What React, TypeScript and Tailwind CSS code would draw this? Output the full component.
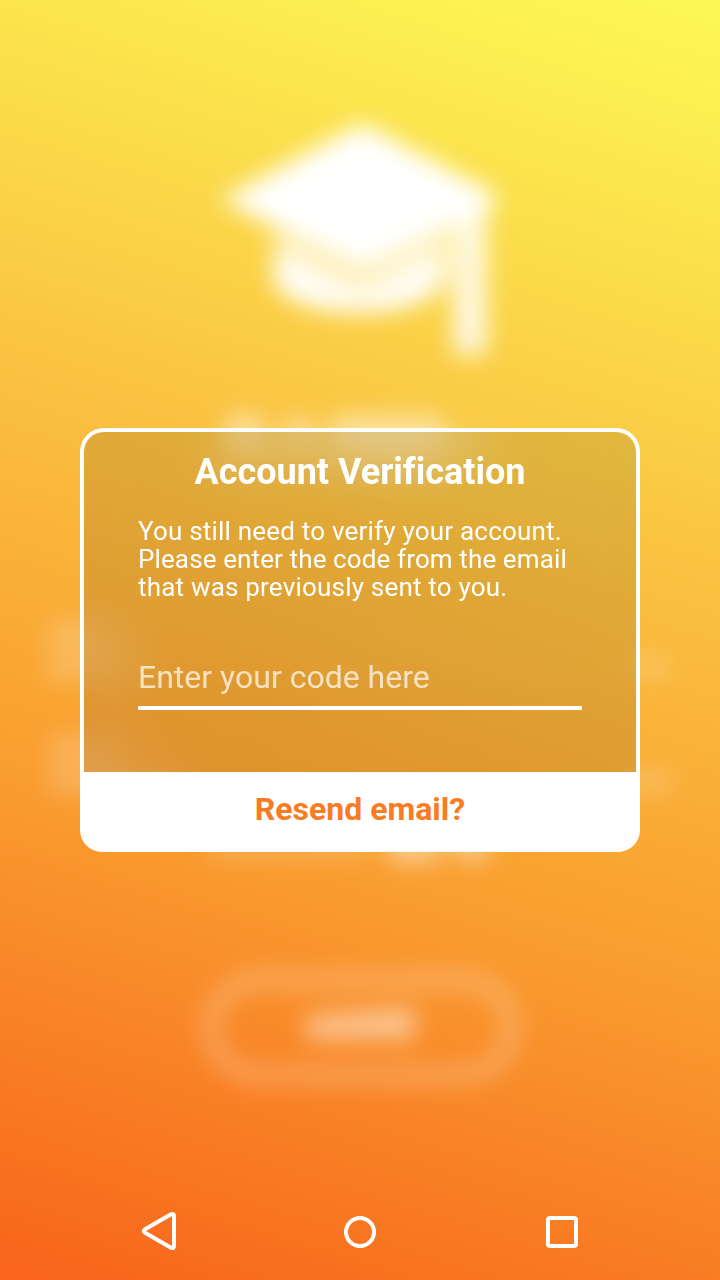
import React from "react";

function LoginBackdrop() {
  return (
    <svg className="absolute inset-0 h-full w-full" viewBox="0 0 720 1280" aria-hidden="true">
      <defs>
        <filter id="soft" filterUnits="userSpaceOnUse" x="0" y="0" width="720" height="1280" colorInterpolationFilters="sRGB">
          <feGaussianBlur stdDeviation="11.5" />
        </filter>
      </defs>
      <g filter="url(#soft)" fill="white">
        <path d="M220 200 362 123 496 194 496 204 362 270Z" />
        <path d="M275 232 361 274 443 232V284Q422 311 360 311 295 311 275 284Z" opacity=".72" />
        <path d="M273 252 361 296 444 252V284Q422 313 360 313 295 313 273 284Z" opacity=".9" />
        <path d="M443 232 455 225V275H443Z" opacity=".3" />
        <path d="M453 215 487 197V355H453Z" opacity=".84" />
      </g>
      <g filter="url(#soft)" fill="white">
        <g opacity=".47">
          <rect x="224" y="414" width="42" height="52" rx="14" />
          <rect x="284" y="417" width="30" height="48" rx="12" />
          <rect x="328" y="414" width="118" height="52" rx="14" />
        </g>
        <rect x="444" y="432" width="50" height="34" opacity=".2" />
        <g opacity=".21">
          <rect x="48" y="621" width="72" height="28" />
          <rect x="48" y="653" width="92" height="27" />
          <rect x="320" y="658" width="260" height="16" opacity=".35" />
          <rect x="628" y="657" width="42" height="20" />
          <rect x="48" y="736" width="82" height="26" />
          <rect x="48" y="767" width="140" height="26" />
          <rect x="628" y="771" width="44" height="21" />
          <rect x="210" y="838" width="155" height="20" />
        </g>
        <g opacity=".45">
          <rect x="386" y="832" width="56" height="31" rx="12" />
          <rect x="454" y="832" width="36" height="29" rx="12" />
        </g>
        <rect x="211" y="980" width="300" height="95" rx="47.5" fill="none" stroke="white" strokeWidth="20" opacity=".22" />
        <path d="M306 1016 370 1011 415 1008V1039H306Z" opacity=".5" />
      </g>
    </svg>
  );
}

function VerificationCard() {
  return (
    <section className="flex h-[424px] w-[560px] flex-col">
      <div className="flex h-[344px] flex-col rounded-t-[24px] border-4 border-b-0 border-white bg-black/10 px-[54px] pt-[19px] backdrop-blur-[22px]">
        <h1 className="text-center text-[36px] leading-[42px] font-bold whitespace-nowrap [font-variant-ligatures:none]">Account Verification</h1>
        <p className="mt-[24px] text-[26px] leading-[28px] tracking-[0.2px] whitespace-nowrap">
          You still need to verify your account.
          <br />
          <span className="tracking-[0.12px]">Please enter the code from the email</span>
          <br />
          that was previously sent to you.
        </p>
        <input
          aria-label="Verification code"
          placeholder="Enter your code here"
          className="mt-[50px] h-[59px] w-full border-b-4 border-white bg-transparent pb-[4px] text-[32px] leading-[40px] outline-none placeholder:text-white/70"
        />
      </div>
      <button className="h-20 rounded-b-[22px] bg-white pb-[6px] text-[32px] leading-[38px] font-bold text-[#f97c24]">Resend email?</button>
    </section>
  );
}

function NavigationBar() {
  return (
    <nav className="flex h-24 w-full items-center justify-between px-[136px]">
      <svg className="h-12 w-12" viewBox="136 1208 48 48" fill="none" stroke="white" strokeWidth="4" strokeLinejoin="round">
        <path d="M145 1229.3 171 1214.3Q174 1213 174 1216V1246Q174 1249 171 1247.7L145 1232.7Q142.500 1231 145 1229.300Z" />
      </svg>
      <svg className="h-12 w-12" viewBox="336 1208 48 48" fill="none" stroke="white" strokeWidth="4">
        <circle cx="360" cy="1232" r="14" />
      </svg>
      <svg className="h-12 w-12" viewBox="536 1208 48 48" fill="none" stroke="white" strokeWidth="4">
        <rect x="548" y="1218" width="28" height="28" rx="2" />
      </svg>
    </nav>
  );
}

export default function App() {
  return (
    <main className="relative flex h-[1280px] w-[720px] flex-col items-center overflow-hidden bg-[linear-gradient(197deg,#fdf854_0%,#fcf452_4%,#fac642_36%,#fab93c_45%,#f99a2e_68%,#f8651b_99%)] font-['Roboto',sans-serif] text-white">
      <LoginBackdrop />
      <div className="relative flex flex-1 items-end">
        <div className="mb-[332px]">
          <VerificationCard />
        </div>
      </div>
      <div className="relative w-full">
        <NavigationBar />
      </div>
    </main>
  );
}
